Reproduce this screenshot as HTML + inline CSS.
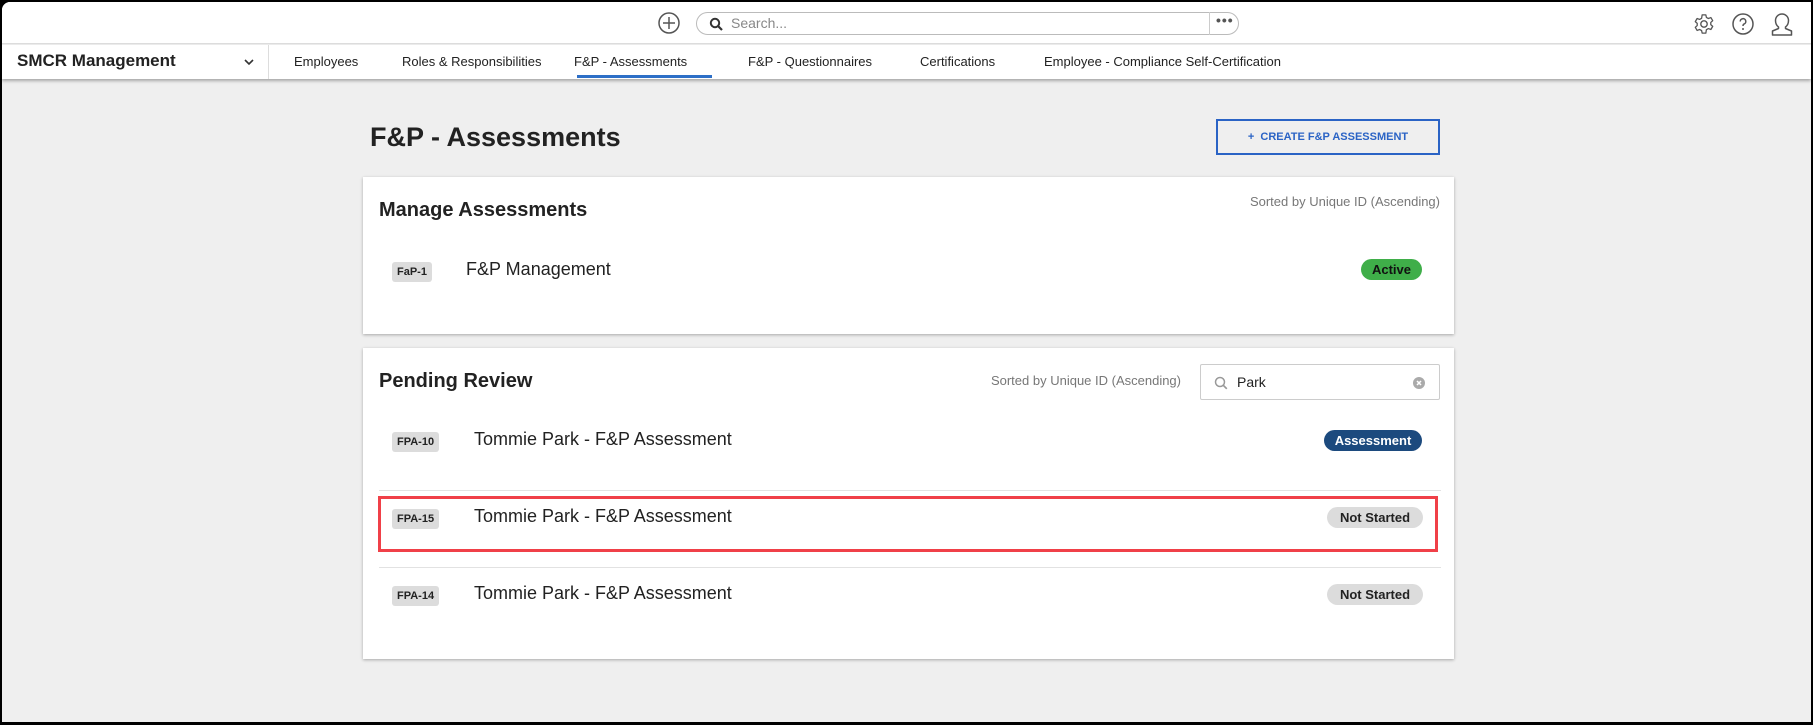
<!DOCTYPE html>
<html><head><meta charset="utf-8"><style>
*{box-sizing:border-box;margin:0;padding:0}
body{width:1813px;height:725px;background:#000;font-family:"Liberation Sans",sans-serif;overflow:hidden;position:relative}
#app{position:absolute;left:2px;top:2px;width:1809px;height:720px;background:#efefef;border-top-left-radius:8px;overflow:hidden}
.abs{position:absolute}
#top{left:0;top:0;width:100%;height:42px;background:#fff;border-bottom:1px solid #ddd}
#nav{left:0;top:43px;width:100%;height:34px;background:#fff;box-shadow:0 2px 3px rgba(0,0,0,.3)}
.ni{position:absolute;top:9px;font-size:13px;color:#222;white-space:nowrap}
.panel{position:absolute;left:361px;width:1091px;background:#fff;box-shadow:0 1px 3px rgba(0,0,0,.3)}
.badge{position:absolute;background:#dcdcdc;border-radius:3px;font-size:11px;font-weight:bold;color:#222;padding:4px 5px}
.pill{position:absolute;border-radius:11px;font-size:13px;font-weight:bold;text-align:center;height:21px;line-height:21px}
.rt{position:absolute;font-size:18px;color:#222;white-space:nowrap}
.sort{position:absolute;font-size:13px;color:#777;white-space:nowrap}
</style></head><body>
<div id="app">
<div id="top" class="abs">
 <svg class="abs" style="left:655px;top:9px" width="24" height="24" viewBox="0 0 24 24"><circle cx="12" cy="12" r="10" fill="none" stroke="#555" stroke-width="1.5"/><path d="M12 6v12M6 12h12" stroke="#555" stroke-width="1.5"/></svg>
 <div class="abs" style="left:694px;top:10px;width:543px;height:23px;border:1px solid #bbb;border-radius:12px"></div>
 <svg class="abs" style="left:707px;top:15px" width="14" height="14" viewBox="0 0 14 14"><circle cx="6" cy="6" r="4.2" fill="none" stroke="#333" stroke-width="2"/><path d="M9 9l4 4" stroke="#333" stroke-width="2.2"/></svg>
 <div class="abs" style="left:729px;top:13px;font-size:14px;color:#888">Search...</div>
 <div class="abs" style="left:1207px;top:10px;width:1px;height:23px;background:#ccc"></div>
 <div class="abs" style="left:1214px;top:10px;font-size:14px;color:#555;letter-spacing:1px;font-weight:bold">•••</div>
 <svg class="abs" style="left:1691px;top:11px" width="22" height="22" viewBox="0 0 24 24"><circle cx="12" cy="12" r="3.5" fill="none" stroke="#555" stroke-width="1.5"/><path d="M10 2h4l.6 2.8 2.2 1.2 2.7-1 2 3.4-2.1 1.9v2.4l2.1 1.9-2 3.4-2.7-1-2.2 1.2L14 22h-4l-.6-2.8-2.2-1.2-2.7 1-2-3.4 2.1-1.9V11.3L2.5 9.4l2-3.4 2.7 1 2.2-1.2z" fill="none" stroke="#555" stroke-width="1.4" stroke-linejoin="round"/></svg>
 <svg class="abs" style="left:1729px;top:10px" width="24" height="24" viewBox="0 0 24 24"><circle cx="12" cy="12" r="10" fill="none" stroke="#555" stroke-width="1.5"/><path d="M9.2 9.5a2.8 2.8 0 1 1 3.8 2.6c-.8.4-1 1-1 1.9" fill="none" stroke="#555" stroke-width="1.5"/><circle cx="12" cy="17" r="1" fill="#555"/></svg>
 <svg class="abs" style="left:1768px;top:9px" width="24" height="26" viewBox="0 0 24 26"><path d="M8.5 16c-2-1.5-3-4-3-6.5a6.5 6.5 0 0 1 13 0c0 2.5-1 5-3 6.5v1.5l6 2.5v4H2.5v-4l6-2.5z" fill="none" stroke="#555" stroke-width="1.5" stroke-linejoin="round"/></svg>
</div>
<div id="nav" class="abs">
 <div class="abs" style="left:15px;top:6px;font-size:17px;font-weight:bold;color:#222">SMCR Management</div>
 <svg class="abs" style="left:242px;top:13px" width="10" height="8" viewBox="0 0 10 8"><path d="M1 2l4 4 4-4" fill="none" stroke="#333" stroke-width="1.6"/></svg>
 <div class="abs" style="left:266px;top:0;width:1px;height:34px;background:#ddd"></div>
 <div class="ni" style="left:292px">Employees</div>
 <div class="ni" style="left:400px">Roles &amp; Responsibilities</div>
 <div class="ni" style="left:572px">F&amp;P - Assessments</div>
 <div class="abs" style="left:575px;top:30px;width:135px;height:3px;background:#2d6fc7"></div>
 <div class="ni" style="left:746px">F&amp;P - Questionnaires</div>
 <div class="ni" style="left:918px">Certifications</div>
 <div class="ni" style="left:1042px">Employee - Compliance Self-Certification</div>
</div>
<div class="abs" style="left:368px;top:120px;font-size:27px;font-weight:bold;color:#222">F&amp;P - Assessments</div>
<div class="abs" style="left:1214px;top:117px;width:224px;height:36px;border:2px solid #2a63c5;color:#2a63c5;font-size:11px;font-weight:bold;text-align:center;line-height:32px">+&nbsp;&nbsp;CREATE F&amp;P ASSESSMENT</div>

<div class="panel" style="top:175px;height:157px">
 <div class="abs" style="left:16px;top:22px;font-size:20px;font-weight:bold;color:#222">Manage Assessments</div>
 <div class="sort" style="right:14px;top:17px">Sorted by Unique ID (Ascending)</div>
 <div class="badge" style="left:29px;top:85px">FaP-1</div>
 <div class="rt" style="left:103px;top:82px">F&amp;P Management</div>
 <div class="pill" style="left:998px;top:82px;width:61px;background:#3fae49;color:#111">Active</div>
</div>

<div class="panel" style="top:346px;height:311px">
 <div class="abs" style="left:16px;top:22px;font-size:20px;font-weight:bold;color:#222">Pending Review</div>
 <div class="sort" style="right:273px;top:25px">Sorted by Unique ID (Ascending)</div>
 <div class="abs" style="left:837px;top:16px;width:240px;height:36px;border:1px solid #ccc;border-radius:2px"></div>
 <svg class="abs" style="left:851px;top:28px" width="14" height="14" viewBox="0 0 14 14"><circle cx="6" cy="6" r="4.5" fill="none" stroke="#999" stroke-width="1.5"/><path d="M9.3 9.3l3.5 3.5" stroke="#999" stroke-width="1.7"/></svg>
 <div class="abs" style="left:874px;top:26px;font-size:14px;color:#222">Park</div>
 <svg class="abs" style="left:1050px;top:29px" width="12" height="12" viewBox="0 0 12 12"><circle cx="6" cy="6" r="6" fill="#aaa"/><path d="M4 4l4 4M8 4l-4 4" stroke="#fff" stroke-width="1.5"/></svg>
 <div class="badge" style="left:29px;top:84px">FPA-10</div>
 <div class="rt" style="left:111px;top:81px">Tommie Park - F&amp;P Assessment</div>
 <div class="pill" style="left:961px;top:82px;width:98px;background:#1c4a7e;color:#fff">Assessment</div>
 <div class="abs" style="left:16px;top:142px;width:1062px;height:1px;background:#e2e2e2"></div>
 <div class="abs" style="left:15px;top:148px;width:1060px;height:56px;border:3px solid #f04048"></div>
 <div class="badge" style="left:29px;top:161px">FPA-15</div>
 <div class="rt" style="left:111px;top:158px">Tommie Park - F&amp;P Assessment</div>
 <div class="pill" style="left:964px;top:159px;width:96px;background:#dcdcdc;color:#222">Not Started</div>
 <div class="abs" style="left:16px;top:219px;width:1062px;height:1px;background:#e2e2e2"></div>
 <div class="badge" style="left:29px;top:238px">FPA-14</div>
 <div class="rt" style="left:111px;top:235px">Tommie Park - F&amp;P Assessment</div>
 <div class="pill" style="left:964px;top:236px;width:96px;background:#dcdcdc;color:#222">Not Started</div>
</div>
</div>
</body></html>
